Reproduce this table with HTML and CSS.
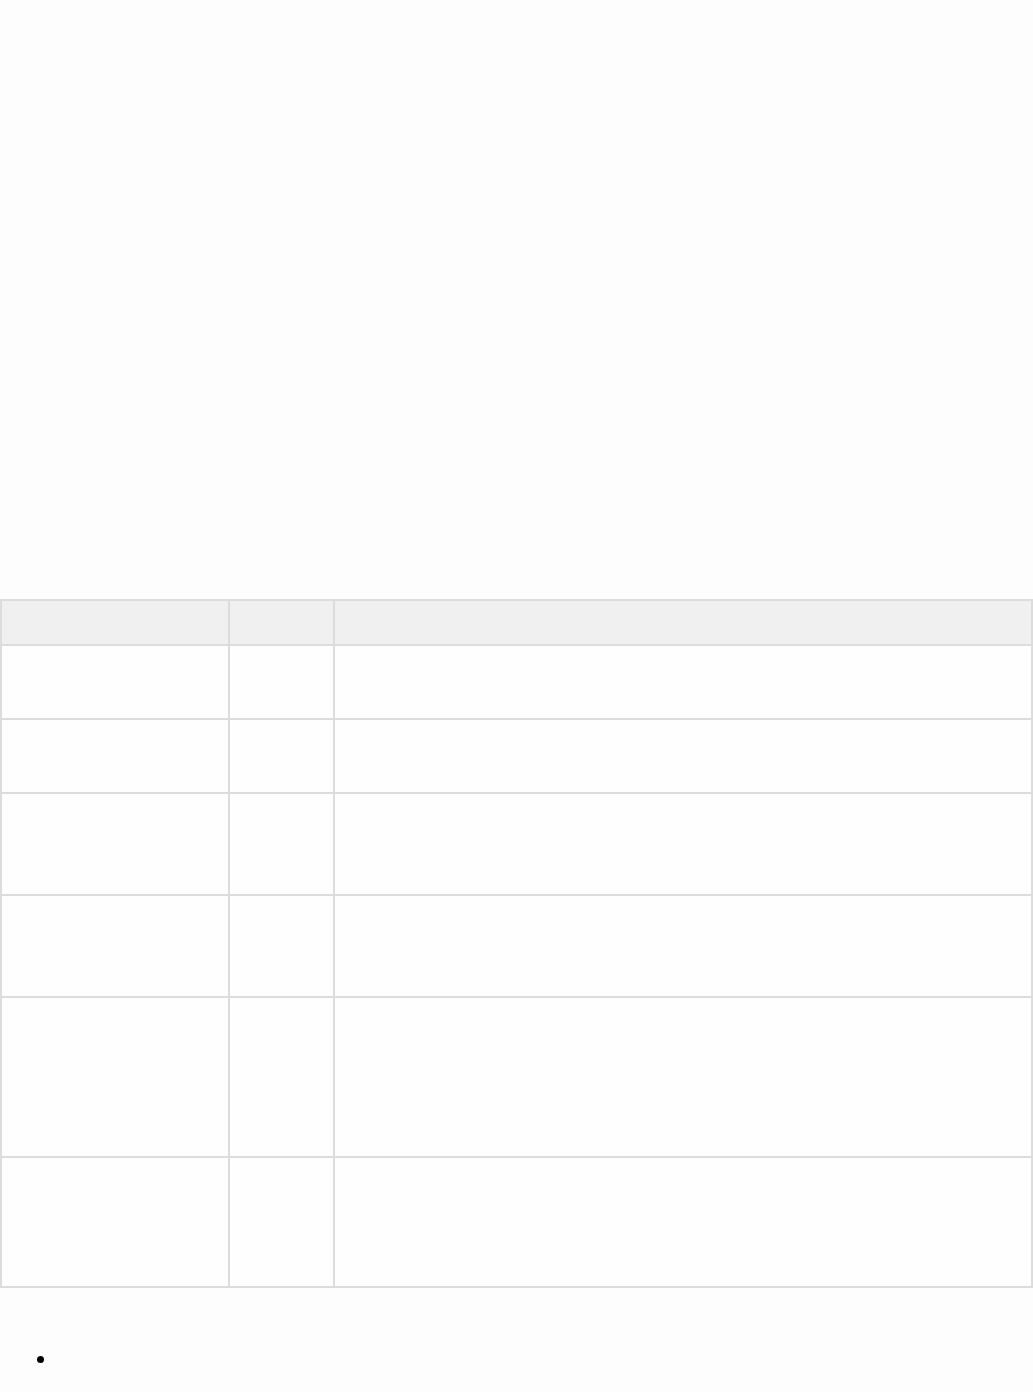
FILE: index.html
```html
<!DOCTYPE html>
<html lang="en">
<head>
<meta charset="utf-8">
<title>Table</title>
<link rel="stylesheet" href="styles.css">
</head>
<body>
<main class="page">
  <div class="spacer"></div>
  <table class="grid">
    <colgroup>
      <col class="c1">
      <col class="c2">
      <col class="c3">
    </colgroup>
    <thead>
      <tr class="h-head"><th></th><th></th><th></th></tr>
    </thead>
    <tbody>
      <tr class="h-74"><td></td><td></td><td></td></tr>
      <tr class="h-74"><td></td><td></td><td></td></tr>
      <tr class="h-102"><td></td><td></td><td></td></tr>
      <tr class="h-102"><td></td><td></td><td></td></tr>
      <tr class="h-160"><td></td><td></td><td></td></tr>
      <tr class="h-130"><td></td><td></td><td></td></tr>
    </tbody>
  </table>
  <ul class="list">
    <li>&nbsp;</li>
  </ul>
</main>
</body>
</html>
```

FILE: styles.css
```css
html, body {
  margin: 0;
  padding: 0;
  background: #fdfdfd;
  font-family: "Liberation Sans", Arial, sans-serif;
  font-size: 16px;
  color: #000;
}

.page {
  display: block;
}

.spacer {
  height: 599px;
}

.grid {
  width: 1031px;
  table-layout: fixed;
  border-collapse: collapse;
  border: 2px solid #dcdcdc;
}

.c1 { width: 228px; }
.c2 { width: 105px; }
.c3 { width: 698px; }

.grid th,
.grid td {
  border: 2px solid #dcdcdc;
  padding: 0;
}

.grid th {
  background: #f0f0f0;
}

.grid td {
  background: #fefefe;
}

.h-head { height: 45px; }
.h-74 { height: 74px; }
.h-102 { height: 102px; }
.h-160 { height: 160px; }
.h-130 { height: 130px; }

.list {
  margin: 56px 0 0 0;
  padding: 0 0 0 58px;
  font-size: 24px;
  line-height: 28px;
}
```
